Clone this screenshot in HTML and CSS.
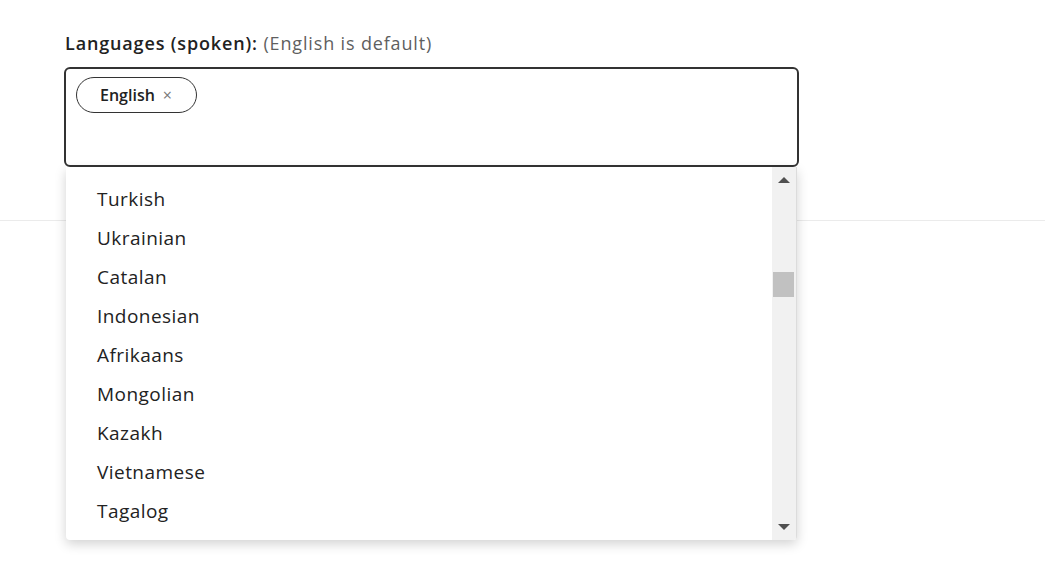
FILE: index.html
```html
<!DOCTYPE html>
<html lang="en">
<head>
<meta charset="utf-8">
<title>Languages</title>
<link rel="stylesheet" href="styles.css">
</head>
<body>
<div class="page">
  <div class="field">
    <div class="label"><span class="label-main">Languages (spoken):</span> <span class="label-hint">(English is default)</span></div>
    <div class="select-wrap">
      <div class="input-box">
        <span class="chip">English <span class="chip-x">&#215;</span></span>
      </div>
      <div class="dropdown">
        <ul class="options">
          <li>Turkish</li>
          <li>Ukrainian</li>
          <li>Catalan</li>
          <li>Indonesian</li>
          <li>Afrikaans</li>
          <li>Mongolian</li>
          <li>Kazakh</li>
          <li>Vietnamese</li>
          <li>Tagalog</li>
        </ul>
        <div class="scrollbar">
          <div class="arrow arrow-up"></div>
          <div class="track"><div class="thumb"></div></div>
          <div class="arrow arrow-down"></div>
        </div>
      </div>
    </div>
  </div>
  <div class="divider"></div>
</div>
</body>
</html>
```
FILE: styles.css
```css
* { box-sizing: border-box; }
html, body { margin: 0; padding: 0; background: #fff; }
body {
  font-family: "Open Sans", "Liberation Sans", sans-serif;
  color: #222;
  width: 1045px;
  height: 586px;
  overflow: hidden;
}
.page {
  padding: 31px 0 0 64px;
  position: relative;
}
.label {
  font-size: 18px;
  line-height: 24px;
  letter-spacing: 0.85px;
  padding-left: 1px;
  margin-bottom: 12px;
}
.label-main { font-weight: 600; color: #222; }
.label-hint { color: #5f5f5f; }
.select-wrap {
  position: relative;
  width: 735px;
  z-index: 2;
}
.input-box {
  height: 100px;
  border: 2px solid #333;
  border-radius: 6px;
  padding: 8px 10px;
  background: #fff;
}
.chip {
  display: inline-flex;
  align-items: center;
  height: 36px;
  padding: 0 24px 0 23px;
  border: 1px solid #333;
  border-radius: 18px;
  font-size: 16px;
  font-weight: 600;
  color: #222;
}
.chip-x {
  margin-left: 8px;
  color: #777;
  font-weight: 400;
  font-size: 16px;
}
.dropdown {
  position: absolute;
  left: 2px;
  top: 100px;
  width: 731px;
  height: 373px;
  background: #fff;
  border-radius: 0 0 4px 4px;
  box-shadow: 0 4px 12px rgba(0,0,0,0.18);
  display: flex;
  overflow: hidden;
}
.options {
  list-style: none;
  margin: 0;
  padding: 13px 0 0 31px;
  flex: 1;
}
.options li {
  height: 39px;
  line-height: 39px;
  font-size: 19px;
  letter-spacing: 0.45px;
  color: #222;
}
.scrollbar {
  width: 25px;
  background: #f1f1f1;
  border-right: 1px solid #dcdcdc;
  display: flex;
  flex-direction: column;
  align-items: center;
}
.arrow {
  width: 0;
  height: 0;
  border-left: 6px solid transparent;
  border-right: 6px solid transparent;
}
.arrow-up {
  margin-top: 10px;
  border-bottom: 6px solid #505050;
}
.arrow-down {
  margin-bottom: 10px;
  border-top: 6px solid #505050;
}
.track {
  flex: 1;
  width: 100%;
  padding-top: 89px;
  display: flex;
  justify-content: center;
}
.thumb {
  width: 21px;
  height: 25px;
  background: #c1c1c1;
  margin-left: -1px;
}
.divider {
  position: absolute;
  left: 0;
  right: 0;
  top: 220px;
  height: 1px;
  background: #ebebeb;
  z-index: 1;
}
```
